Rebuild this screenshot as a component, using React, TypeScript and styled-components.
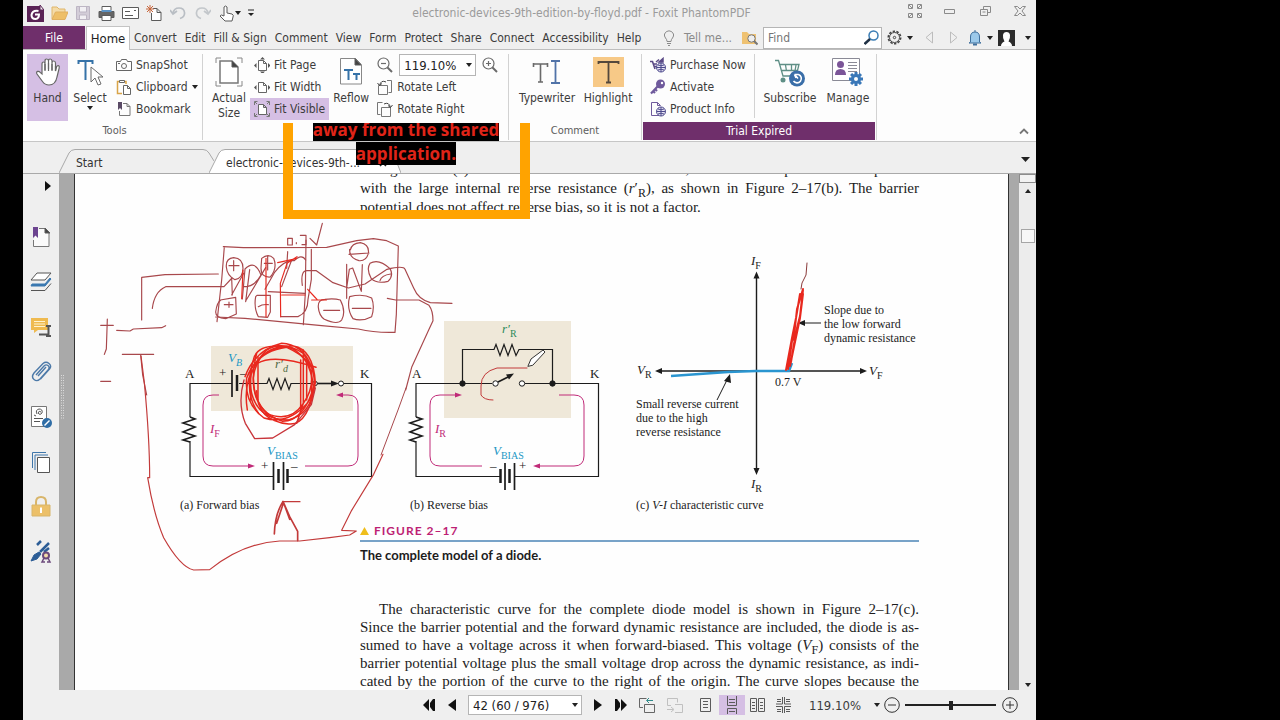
import React from "react";
import styled, { createGlobalStyle } from "styled-components";

const UI = `"DejaVu Sans Condensed", "DejaVu Sans", sans-serif`;
const BOOK = `"Liberation Serif", "Times New Roman", serif`;
const PURPLE = "#6f2f6b";
const LILAC = "#d5bfe4";
const CHROME = "#efefef";
const INK = "#a8484c";
const RED = "#e8281e";

const GlobalStyle = createGlobalStyle`
  *, *::before, *::after { box-sizing: border-box; }
  body { margin: 0; background: #000; font-family: ${UI}; font-size: 12px; color: #3c3c3c; }
  button, input, select { font: inherit; color: inherit; margin: 0; }
  button { border: 0; padding: 0; background: none; }
  svg { display: block; flex: none; }
`;

/* ---------- window frame ---------- */

const Desktop = styled.div`
  height: 100vh;
  padding: 0 244px 0 23px;
  background: #000;
  overflow: hidden;
`;

const Window = styled.main`
  position: relative;
  display: flex;
  flex-direction: column;
  height: 100%;
  background: ${CHROME};
`;

const TitleBar = styled.header`
  display: flex;
  align-items: center;
  height: 26px;
  flex: none;
  padding: 0 8px 0 4px;
`;

const QuickTools = styled.div`
  display: flex;
  align-items: center;
  gap: 7px;
  width: 232px;
`;

const Title = styled.h1`
  flex: 1;
  margin: 0;
  padding-right: 4px;
  font-size: 12px;
  font-weight: 400;
  color: #9b9b9b;
  text-align: center;
  white-space: nowrap;
`;

const WindowTools = styled.div`
  display: flex;
  align-items: center;
  gap: 18px;
  margin-bottom: 5px;
`;

const IconButton = styled.button`
  display: flex;
  align-items: center;
  justify-content: center;
  flex: none;
`;

/* ---------- menu bar ---------- */

const MenuBar = styled.nav`
  display: flex;
  align-items: stretch;
  height: 24px;
  flex: none;
  border-bottom: 1px solid #bdbdbd;
`;

const FileTab = styled.button`
  width: 62px;
  background: ${PURPLE};
  color: #fff;
`;

const HomeTab = styled.button`
  width: 44px;
  margin-left: 1px;
  height: 24px;
  border: 1px solid #c4c4c4;
  border-bottom: 0;
  background: #fff;
  font-size: 13px;
  color: #222;
`;

const MenuItem = styled.button`
  padding: 0 4px;
  white-space: nowrap;
`;

const MenuTools = styled.div`
  display: flex;
  align-items: center;
  flex: 1;
  justify-content: flex-end;
  padding-right: 5px;
`;

const TellMe = styled.button`
  display: flex;
  align-items: center;
  gap: 9px;
  margin-right: 10px;
  color: #8a8a8a;
  white-space: nowrap;
`;

const FindBox = styled.label`
  display: flex;
  align-items: center;
  width: 119px;
  height: 22px;
  margin: 0 5px;
  padding: 0 2px 0 4px;
  border: 1px solid #b5b5b5;
  background: #fff;
  input {
    flex: 1;
    min-width: 0;
    border: 0;
    padding: 0;
    background: none;
    outline: 0;
  }
  input::placeholder { color: #757575; opacity: 1; }
`;

const MenuGlyphs = styled.div`
  display: flex;
  align-items: center;
  gap: 5px;
`;

const AccountButton = styled(IconButton)`
  gap: 10px;
`;

/* ---------- ribbon ---------- */

const Ribbon = styled.section`
  display: flex;
  height: 92px;
  flex: none;
  padding: 4px 7px 0 4px;
  background: #fdfdfd;
  border-bottom: 1px solid #c6c6c6;
`;

const Group = styled.div<{ $width: number }>`
  display: flex;
  flex-direction: column;
  width: ${(p) => p.$width}px;
  margin-bottom: 1px;
  border-right: 1px solid #d2d2d2;
`;

const GroupBody = styled.div<{ $gap?: number; $indent?: number }>`
  display: flex;
  height: 67px;
  flex: none;
  gap: ${(p) => p.$gap ?? 4}px;
  padding-left: ${(p) => p.$indent ?? 0}px;
`;

const GroupLabel = styled.div<{ $alert?: boolean }>`
  height: 18px;
  margin: 1px 1px 0;
  line-height: 18px;
  text-align: center;
  color: ${(p) => (p.$alert ? "#fff" : "#5c5c5c")};
  font-size: ${(p) => (p.$alert ? 12 : 11)}px;
  background: ${(p) => (p.$alert ? PURPLE : "transparent")};
`;

const BigButton = styled.button<{ $width: number; $on?: boolean }>`
  display: flex;
  flex-direction: column;
  align-items: center;
  width: ${(p) => p.$width}px;
  padding-top: 3px;
  line-height: 15px;
  white-space: nowrap;
  background: ${(p) => (p.$on ? LILAC : "none")};
  svg { margin-bottom: 4px; }
`;

const Stack = styled.div`
  display: flex;
  flex-direction: column;
`;

const SmallButton = styled.button<{ $on?: boolean }>`
  display: flex;
  align-items: center;
  gap: 4px;
  height: 22px;
  padding: 0 4px;
  white-space: nowrap;
  background: ${(p) => (p.$on ? LILAC : "none")};
`;

const ZoomRow = styled.div`
  display: flex;
  align-items: center;
  gap: 6px;
  height: 22px;
  padding-left: 4px;
`;

const DropDown = styled.div<{ $width: number; $height: number }>`
  display: grid;
  align-items: center;
  width: ${(p) => p.$width}px;
  height: ${(p) => p.$height}px;
  border: 1px solid #b5b5b5;
  background: #fff;
  color: #222;
  font-size: 13px;
  select, svg { grid-area: 1 / 1; }
  select {
    appearance: none;
    width: 100%;
    border: 0;
    padding: 0 0 0 4px;
    background: none;
    outline: 0;
  }
  svg { justify-self: end; margin-right: 3px; pointer-events: none; }
`;

const Divider = styled.div`
  width: 1px;
  height: 64px;
  background: #d2d2d2;
`;

const Collapse = styled.button`
  margin: auto 0 6px auto;
`;

/* ---------- document tabs ---------- */

const TabStrip = styled.div`
  display: flex;
  align-items: flex-end;
  height: 32px;
  flex: none;
  padding-left: 36px;
  border-bottom: 1px solid #a9a9a9;
`;

const DocTab = styled.button<{ $width: number }>`
  position: relative;
  display: flex;
  align-items: center;
  justify-content: space-between;
  width: ${(p) => p.$width}px;
  height: 24px;
  margin-right: -5px;
  padding: 4px 14px 0 17px;
  color: #333;
  white-space: nowrap;
  > svg:first-child { position: absolute; inset: 0; }
  > span, > svg { position: relative; }
`;

const TabMenu = styled.button`
  margin: 0 6px 11px auto;
`;

/* ---------- document area ---------- */

const Workspace = styled.div`
  display: flex;
  flex: 1;
  min-height: 0;
  background: #a9a9a9;
`;

const SideBar = styled.aside`
  display: flex;
  flex-direction: column;
  align-items: center;
  width: 36px;
  flex: none;
  padding-top: 7px;
  background: ${CHROME};
`;

const Expand = styled.button`
  margin: 0 0 35px 14px;
`;

const SideTools = styled.div`
  display: flex;
  flex-direction: column;
  gap: 23px;
`;

const SideButton = styled(IconButton)`
  width: 24px;
  height: 22px;
`;

const Splitter = styled.div`
  display: flex;
  align-items: center;
  width: 16px;
  flex: none;
  padding: 0 0 70px 2px;
  border-right: 1px solid #333;
`;

const PageView = styled.article`
  position: relative;
  flex: 1;
  min-width: 0;
  overflow: hidden;
  padding-left: 105px;
  margin-right: 10px;
  background: #fefefe;
  border-right: 1px solid #333;
  color: #1c1c1c;
  font-family: ${BOOK};
`;

const Column = styled.div`
  width: 559px;
  margin-left: 180px;
`;

const Lead = styled.p`
  margin: -14px 0 0;
  font-size: 15px;
  line-height: 19px;
`;

const Body = styled.p`
  margin: 36px 0 0;
  font-size: 15px;
  line-height: 18px;
`;

const Line = styled.span<{ $indent?: boolean; $last?: boolean }>`
  display: block;
  padding-left: ${(p) => (p.$indent ? 19 : 0)}px;
  text-align: justify;
  text-align-last: ${(p) => (p.$last ? "left" : "justify")};
  white-space: nowrap;
  sub { font-size: 12px; line-height: 0; }
`;

const Figures = styled.div`
  display: grid;
  grid-template-columns: 230px 226px 1fr;
  margin-top: 33px;
`;

const Figure = styled.figure`
  margin: 0;
  svg { overflow: visible; }
  figcaption { font-size: 12px; line-height: 18px; white-space: nowrap; }
`;

const FigureTitle = styled.h2`
  display: flex;
  align-items: center;
  gap: 5px;
  margin: 7px 0 0;
  height: 21px;
  border-bottom: 2px solid #78a3c8;
  font: 700 12px Lato, sans-serif;
  letter-spacing: 1px;
  color: #bd1f74;
`;

const FigureNote = styled.p`
  margin: 4px 0 0;
  font: 700 13px/18px Lato, sans-serif;
`;

const InkLayer = styled.svg`
  position: absolute;
  top: 0;
  left: 0;
  pointer-events: none;
`;

const ScrollBar = styled.div`
  display: flex;
  flex-direction: column;
  align-items: center;
  width: 17px;
  flex: none;
  padding-bottom: 3px;
  background: #ececec;
`;

const SplitBox = styled.div`
  width: 100%;
  height: 9px;
  margin-bottom: 6px;
  border: 1px solid #8c8c8c;
  background: #f2f2f2;
`;

const Thumb = styled.div`
  width: 14px;
  height: 14px;
  margin: 36px 0 auto;
  border: 1px solid #a5a5a5;
  background: #f7f7f7;
`;

/* ---------- status bar ---------- */

const StatusBar = styled.footer`
  display: flex;
  align-items: center;
  justify-content: flex-end;
  height: 30px;
  flex: none;
  padding-right: 18px;
`;

const StatusGroup = styled.div<{ $gap: number; $after: number }>`
  display: flex;
  align-items: center;
  gap: ${(p) => p.$gap}px;
  margin-right: ${(p) => p.$after}px;
`;

const ViewMode = styled.button<{ $on?: boolean }>`
  display: flex;
  align-items: center;
  justify-content: center;
  width: 26px;
  height: 20px;
  background: ${(p) => (p.$on ? LILAC : "none")};
`;

const ZoomValue = styled.button`
  display: flex;
  align-items: center;
  gap: 13px;
  margin-right: 4px;
  font-size: 13px;
`;

const ZoomSlider = styled.input`
  appearance: none;
  width: 91px;
  height: 16px;
  margin: 0 6px 0 5px;
  background: linear-gradient(#222, #222) center / 100% 2px no-repeat;
  &::-webkit-slider-thumb {
    appearance: none;
    width: 4px;
    height: 9px;
    background: #222;
  }
`;

/* ---------- screen sharing frame ---------- */

const ShareFrame = styled.div`
  position: absolute;
  left: 260px;
  top: 123px;
  width: 247px;
  height: 96px;
  border: solid #ffa300;
  border-width: 0 10px 9px;
  pointer-events: none;
`;

const ShareNotice = styled.p`
  position: absolute;
  left: 273px;
  top: 123px;
  width: 220px;
  height: 42px;
  margin: 0;
  overflow: hidden;
  display: flex;
  flex-direction: column;
  align-items: center;
  justify-content: flex-end;
  gap: 1px;
  font: 700 17px/23px "Open Sans", sans-serif;
  color: #e02418;
  white-space: nowrap;
  span { background: #000; }
`;

/* ---------- glyphs ---------- */

type SvgProps = { w: number; h: number; children: React.ReactNode; sw?: number; stroke?: string; vb?: string };

const Svg = ({ w, h, children, sw = 1, stroke = "#5b5b5b", vb }: SvgProps) => (
  <svg width={w} height={h} viewBox={vb ?? `0 0 ${w} ${h}`} fill="none" stroke={stroke} strokeWidth={sw} aria-hidden="true">
    {children}
  </svg>
);

const Caret = ({ w = 6, h = 4 }: { w?: number; h?: number }) => (
  <Svg w={w} h={h}><path d={`M0 0h${w}L${w / 2} ${h}z`} fill="#222" stroke="none" /></Svg>
);

const HandGlyph = () => (
  <Svg w={28} h={30} stroke="#666" sw={1.2}>
    <path d="M8 17V7q0-2 1.500-2T11 7v6V4q0-2 1.700-2T14.500 4v8V4q0-2 1.700-2T18 4v9V6q0-2 1.700-2T21.500 6v8l1-4q1-2 2.300-1.200.8.600.3 2.600L23 20q-1.500 8-8 8-4 0-6.500-3.500L3 17q-1-2 .6-2.600 1.400-.5 2.600 1z" fill="#fff" />
    <path d="M11 7v7M14.500 6v8M18 7v7M21.500 9v5" />
  </Svg>
);

const SelectGlyph = () => (
  <Svg w={28} h={30}>
    <path d="M2 4h15M9.500 4v19M2.500 3v4M16.500 3v4" stroke="#3572a8" strokeWidth={2} />
    <path d="M15 10v15l4-4 3 7 3-1-3-7h5z" fill="#fff" stroke="#6a6a6a" />
  </Svg>
);

const PageGlyph = () => (
  <Svg w={28} h={30}>
    <path d="M1 6V1h5M22 1h5v5M27 24v5h-5M6 29H1v-5" stroke="#888" />
    <path d="M5 4h12l6 6v16H5z" stroke="#777" strokeWidth={1.5} fill="#fff" />
    <path d="M17 4v6h6z" fill="#444" />
  </Svg>
);

const FitGlyph = ({ kind }: { kind: "page" | "width" | "visible" }) => (
  <Svg w={16} h={16} stroke="#666">
    <path d="M4.500 3.500h5l3 3v7h-8zM9.500 3.500v3h3" fill="#fff" />
    {kind !== "visible" && <path d="M2.500 6L0 8.500 2.500 11zM14 6l2.500 2.500L14 11z" fill="#555" stroke="none" />}
    {kind === "page" && <path d="M6 2.500L8.500 0 11 2.500zM6 14.500h5L8.500 17z" fill="#555" stroke="none" />}
    {kind === "visible" && <path d="M.5 4V.500h3M12.500.500h3V4M15.500 12v3.500h-3M3.500 15.500h-3V12M1 1l2 2M15 1l-2 2M1 15l2-2M15 15l-2-2" stroke="#777" />}
  </Svg>
);

const ReflowGlyph = () => (
  <Svg w={28} h={30}>
    <path d="M3.500 1.500h15l6 6V27h-21z" stroke="#888" fill="#fff" />
    <path d="M18 1.500v6.500h6z" fill="#444" />
    <path d="M7 13h9M11.500 13v10M16 17h7M19.500 17v6" stroke="#3572a8" strokeWidth={2} />
  </Svg>
);

const Magnifier = ({ plus }: { plus?: boolean }) => (
  <Svg w={16} h={16} stroke="#6a6a6a" sw={1.2}>
    <circle cx="6.500" cy="6.500" r="5.500" />
    <path d={plus ? "M4 6.500h5M6.500 4v5" : "M4 6.500h5"} />
    <path d="M10.500 10.500L15 15" strokeWidth={2} />
  </Svg>
);

const RotateGlyph = ({ right }: { right?: boolean }) => (
  <Svg w={16} h={16} stroke="#777">
    {right ? (
      <>
        <path d="M3.500 13.500h-3V1.500h5M4.500 6.500h9v9h-9z" />
        <path d="M7 3q5-2.500 6.500 3.500M11 4.500l2.500 2 2-2.500" stroke="#444" />
      </>
    ) : (
      <>
        <path d="M10 1.500h4.500v12h-3M1.500 6.500h9v9h-9z" />
        <path d="M9 3Q4 .500 2.500 6.500M.5 4l2 2.500L5 4.500" stroke="#444" />
      </>
    )}
  </Svg>
);

const CameraGlyph = () => (
  <Svg w={16} h={14} stroke="#666">
    <path d="M.5 3.500h4l1-2h5l1 2h4v9H.500z" /><circle cx="8" cy="8" r="2.500" /><path d="M2 5.500h2" />
  </Svg>
);

const ClipboardGlyph = () => (
  <Svg w={16} h={16} stroke="#666">
    <path d="M10 5V2.500H1.500v12H6" stroke="#d9a548" strokeWidth={1.5} /><path d="M3.500 3.500v-2h5v2z" fill="#fff" />
    <path d="M7.500 6.500h4l3 3v6h-7zM11.500 6.500v3h3" fill="#fff" />
  </Svg>
);

const BookmarkGlyph = () => (
  <Svg w={16} h={16} stroke="#777">
    <path d="M7 2.500h4l3 3v9H3.500V10M11 2.500v3h3" /><path d="M2 1h4v8L4 7 2 9z" fill="#5a4a66" stroke="none" />
  </Svg>
);

const TypeGlyph = () => (
  <Svg w={30} h={30}>
    <path d="M1 7h15M1.500 6v4M15.500 6v4M8.500 7v18M6 25h5" stroke="#6a6a6a" strokeWidth={1.6} />
    <path d="M19 4h9M19 26h9M23.500 4v22" stroke="#5173a8" strokeWidth={1.8} />
  </Svg>
);

const HighlightGlyph = () => (
  <Svg w={31} h={30}>
    <path d="M0 0h31v30H0z" fill="#f7c987" stroke="none" />
    <path d="M5 5h21M5.500 4v3M25.500 4v3M15.500 5v20M13 25.500h5" stroke="#54483c" strokeWidth={1.8} />
  </Svg>
);

const Globe = () => (
  <>
    <circle cx="11" cy="10.500" r="4.500" fill="#e9e6f5" stroke="#4d4a8c" />
    <path d="M6.500 10.500h9M11 6v9M8 8q3 1.500 6 0M8 13q3-1.500 6 0" stroke="#4d4a8c" />
  </>
);

const PurchaseGlyph = () => (
  <Svg w={16} h={16} stroke="#5b4a86">
    <path d="M0 4.500h2.500L5 12M3 7h4M4 9.500h3" strokeWidth={1.6} /><path d="M6 5l3-2.500M9 5l4-3.500V5z" fill="#5b4a86" strokeWidth={1.5} /><Globe />
  </Svg>
);

const KeyGlyph = () => (
  <Svg w={16} h={16} stroke="#6f5a9c">
    <circle cx="10.500" cy="5" r="4.500" fill="#6f5a9c" stroke="none" /><circle cx="12" cy="4" r="1.200" fill="#fff" stroke="none" />
    <path d="M8 7l-7 7.500M3 12l2 2M5 10l2 2" strokeWidth={2.2} />
  </Svg>
);

const ProductGlyph = () => (
  <Svg w={16} h={16} stroke="#6f5a9c"><path d="M9 14.500H1.500V1.500h6l3 3M7.500 1.500v3h3" /><Globe /></Svg>
);

const CartGlyph = () => (
  <Svg w={30} h={30} stroke="#5f8f86">
    <path d="M0 3.500h3.500L8 19h7M5 7.500h19l-1.500 6H7M10.500 8l1 6M16.500 8v6M21 8l-1 6" strokeWidth={1.3} />
    <circle cx="8" cy="23" r="2.500" fill="#5f8f86" stroke="none" />
    <circle cx="22" cy="21.500" r="8" fill="#3a6ea8" stroke="none" />
    <path d="M18.500 24a4.300 4.300 0 105-6.500M23.500 17.500h-4M19.500 17.500l1.500 3.500M19.500 17.500l3.500 4" stroke="#fff" strokeWidth={1.6} />
  </Svg>
);

const teeth = Array.from({ length: 8 }, (_, i) => i * 45);

const ManageGlyph = () => (
  <Svg w={32} h={30} stroke="#8a8a96">
    <path d="M.5 1.500h27v22H.500z" fill="#fff" />
    <circle cx="8.500" cy="7.500" r="3.500" fill="#7b5598" stroke="none" />
    <path d="M3 18q0-6 5.500-6t5.500 6z" fill="#7b5598" stroke="none" />
    <path d="M16 5.500h9M16 8.500h9M16 11.500h9M16 14.500h9" />
    <g stroke="#3a78b8" strokeWidth={3}>
      {teeth.map((a) => <path key={a} d="M24 18v-3" transform={`rotate(${a} 24 22)`} />)}
      <circle cx="24" cy="22" r="3.500" fill="#fff" />
    </g>
  </Svg>
);

const quickGlyphs: [string, React.ReactNode][] = [
  ["Foxit", <Svg w={17} h={17}><path d="M0 1h13l4 4v12H0z" fill="#5a2356" stroke="none" /><path d="M13 0v5h4z" fill="#efefef" stroke="#5a2356" /><path d="M11.500 6q-6-1-7 4 0 4 4 4 3.500-.500 3.500-4.500H8" stroke="#fff" strokeWidth={2} /></Svg>],
  ["Open", <Svg w={17} h={16}><path d="M1 14V2h5l2 2h6v4" fill="#f4dba7" stroke="#dfb66b" /><path d="M1 14.500L4.500 7H17l-3 7.500z" fill="#eebf68" stroke="#e0b060" /></Svg>],
  ["Save", <Svg w={16} h={16} stroke="#bdb6c4"><path d="M1.500 1.500h13v13h-13z" fill="#d3cdd8" /><path d="M4.500 2v5h7V2M4.500 14v-4h7v4" fill="#f2f0f4" /></Svg>],
  ["Print", <Svg w={17} h={17}><path d="M4 5V1.500h9V5" fill="#fff" /><path d="M1 6.500h15v6H1z" fill="#666" /><path d="M3.500 6h10" stroke="#5b92c4" strokeWidth={2} /><path d="M4 10.500h9v5H4z" fill="#fff" /></Svg>],
  ["Email", <Svg w={17} h={14}><path d="M.5 1.500h16v11H.500z" fill="#fff" /><path d="M3 5.500h5M3 9.500h8M12 4.500h2" /></Svg>],
  ["New", <Svg w={17} h={17}><path d="M7 3.500h4l4 4v8H5.500V8M11 3.500v4h4" fill="#fff" /><path d="M4 0v8M0 4h8M1 1l6 6M7 1L1 7" stroke="#c8663c" /></Svg>],
  ["Undo", <Svg w={17} h={16} stroke="#b9bec4" sw={1.7}><path d="M3 8Q4 3 9 3q5 0 5.500 4.500T10 13.500M0 5l3 4 4-3" /></Svg>],
  ["Redo", <Svg w={17} h={16} stroke="#c3c7cb" sw={1.7}><path d="M14 8q-1-5-6-5-5 0-5.500 4.500T7 13.500M17 5l-3 4-4-3" /></Svg>],
];

const sideGlyphs: [string, React.ReactNode][] = [
  ["Bookmarks", <Svg w={22} h={22}><path d="M9 2.500h6l4 4V20.500H3.500V14" stroke="#777" fill="#fafafa" /><path d="M15 2v5h5z" fill="#444" /><path d="M3 1h5v11L5.500 9.500 3 12z" fill="#6c4490" stroke="none" /></Svg>],
  ["Layers", <Svg w={24} h={22}><path d="M8 2h14l-6 7H2z" fill="#fff" stroke="#555" /><path d="M3 13h13l5-6 1 1-6 7H2z" fill="#3a78b0" stroke="#3a78b0" /><path d="M2 19.500h14l6-7" stroke="#555" /></Svg>],
  ["Comments", <Svg w={22} h={22}><path d="M1 2h17v12H8l-4 3v-3H1z" fill="#efba50" stroke="none" /><path d="M4 5.500h11M4 8h11M4 10.500h11" stroke="#fff3d0" /><path d="M9 18.500h10M18.500 10v10M16 10h5M16 20h5" stroke="#555" strokeWidth={2} /></Svg>],
  ["Attachments", <Svg w={22} h={22}><path d="M6 14l8-9q2-2 4-.5t.5 4L10 18q-3 3-6 .5T4 12l9-9.500q3-2.500 6 0t.5 5.500l-9 10M8 15l8-9" stroke="#4c79a8" strokeWidth={1.4} /></Svg>],
  ["Signatures", <Svg w={24} h={24}><path d="M2.500 1.500h15v20h-15z" fill="#fff" stroke="#777" /><path d="M8 9q-2-4 2-5 4 0 3 4-2 3-4 0 1-3 3-1M5 13.500h9M5 16.500h6M5 10l2 1" stroke="#555" /><circle cx="18" cy="18" r="5" fill="#2f6da6" stroke="none" /><path d="M15.500 20.500l5-5" stroke="#fff" strokeWidth={1.5} /></Svg>],
  ["Pages", <Svg w={22} h={22} stroke="#3f77ab"><path d="M2.500 17V1.500H16M5 19V4h13" /><path d="M7.500 6.500h12v15h-12z" fill="#fff" stroke="#555" /></Svg>],
  ["Security", <Svg w={22} h={24}><path d="M6 10V7q0-5 5-5t5 5v3" stroke="#d8b56a" strokeWidth={2} /><path d="M2 10h18v11H2z" fill="#ecc069" stroke="#d8b56a" /><path d="M11 13v5M10 13.500h2" stroke="#fff" strokeWidth={2} /></Svg>],
  ["Fill and sign", <Svg w={24} h={24} stroke="#2c5d96"><path d="M2 21l3-6 5-3 2 2-4 5z" fill="#2c5d96" /><path d="M11 12l9-9M8 5l4-4M15 12l5-4" strokeWidth={2.5} /><circle cx="17" cy="15.500" r="3" stroke="#6c4a7c" strokeWidth={2} fill="#f3dca8" /><path d="M15 18l-2 4h3M19 18l2 4h-3" stroke="#6c4a7c" strokeWidth={1.5} /></Svg>],
];

/* ---------- figures ---------- */

const Sym = styled.text<{ $c?: string; $size?: number }>`
  font-family: ${BOOK};
  font-size: ${(p) => p.$size ?? 13}px;
  fill: ${(p) => p.$c ?? "#1c1c1c"};
  stroke: none;
`;

type QuantityProps = { x: number; y: number; v: string; s: string; c?: string; italicSub?: boolean };

const Quantity = ({ x, y, v, s, c, italicSub }: QuantityProps) => (
  <Sym x={x} y={y} $c={c}>
    <tspan fontStyle="italic">{v}</tspan>
    <tspan dy="4" fontSize="10" fontStyle={italicSub ? "italic" : "normal"}>{s}</tspan>
  </Sym>
);

const MAGENTA = "#c02a78";
const CYAN = "#1a97c4";

const ForwardCircuit = () => (
  <svg width="230" height="246" viewBox="180 250 230 246" fill="none" stroke="#1c1c1c" role="img" aria-label="Forward bias circuit">
    <path d="M211 346h142v65H211z" fill="#efe8d9" stroke="none" />
    <path d="M232 383.500H190V417M239 383.500h28l2-5 4 11 4-11 4 11 4-11 4 11 2-6h22M343.500 383.500H371.500V476.500H288M273 476.500H190V441" strokeWidth={1.2} />
    <path d="M190 417l5 2-12 4 12 4-12 5 12 4-12 4 7 2" strokeWidth={1.6} />
    <path d="M232 370v27M273.500 462v28M283.500 462v28" strokeWidth={1.7} />
    <path d="M237 375v16M278.500 469v14M287.500 469v14" strokeWidth={2.5} />
    <path d="M317 383.500h18" strokeWidth={1.6} /><path d="M331 380.500l8 3-8 3z" fill="#1c1c1c" stroke="none" />
    <circle cx="315" cy="383.500" r="2.300" fill="#fff" /><circle cx="341" cy="383.500" r="2.500" fill="#fff" />
    <g stroke={MAGENTA}>
      <path d="M219 395h-6q-10 0-10 10v51q0 10 10 10h36M305 466h43q10 0 10-10v-51q0-10-10-10h-7" />
      <path d="M248 463.500l7 2.500-7 2.500zM343 392.500l-7 2.500 7 2.500z" fill={MAGENTA} stroke="none" />
    </g>
    <Sym x={185} y={378}>A</Sym><Sym x={360} y={378}>K</Sym>
    <Sym x={219} y={377}>+</Sym><Sym x={240} y={377}>–</Sym>
    <Sym x={261} y={470}>+</Sym><Sym x={291} y={470}>–</Sym>
    <Quantity x={228} y={362} v="V" s="B" c={CYAN} italicSub />
    <Quantity x={275} y={368} v="r′" s="d" c="#4f6a46" italicSub />
    <Quantity x={210} y={433} v="I" s="F" c={MAGENTA} />
    <Quantity x={267} y={455} v="V" s="BIAS" c={CYAN} />
  </svg>
);

const ReverseCircuit = () => (
  <svg width="226" height="246" viewBox="410 250 226 246" fill="none" stroke="#1c1c1c" role="img" aria-label="Reverse bias circuit">
    <path d="M444 321h127v97H444z" fill="#efe8d9" stroke="none" />
    <path d="M492 383.500H416V417M462.500 383V349.500H494l2-5 4 11 4-11 4 11 4-11 4 11 3-6h33.500V383M525 383.500h73.500V476.500H515M500 476.500H416V441" strokeWidth={1.2} />
    <path d="M416 417l6 2-12 4 12 4-12 5 12 4-12 4 6 2" strokeWidth={1.6} />
    <path d="M505 463v27M514.500 463v27" strokeWidth={1.7} />
    <path d="M500.500 469v14M509.500 469v14" strokeWidth={2.5} />
    <path d="M498 382l12-6" strokeWidth={1.6} /><path d="M506 374.500l8-1-5 6z" fill="#1c1c1c" stroke="none" />
    <circle cx="462.500" cy="383.500" r="2.700" fill="#1c1c1c" /><circle cx="552.500" cy="383.500" r="2.700" fill="#1c1c1c" />
    <circle cx="495.500" cy="383.500" r="2.700" fill="#fff" /><circle cx="522" cy="383.500" r="2.700" fill="#fff" />
    <g stroke={MAGENTA}>
      <path d="M482 466h-42q-10 0-10-10v-51q0-10 10-10h16M559 395h15q10 0 10 10v51q0 10-10 10h-36" />
      <path d="M455 392.500l7 2.500-7 2.500zM540 463.500l-7 2.500 7 2.500z" fill={MAGENTA} stroke="none" />
    </g>
    <Sym x={412} y={378}>A</Sym><Sym x={590} y={378}>K</Sym>
    <Sym x={490} y={470}>–</Sym><Sym x={519} y={470}>+</Sym>
    <Quantity x={502} y={333} v="r′" s="R" c="#2b8a5a" />
    <Quantity x={435} y={433} v="I" s="R" c={MAGENTA} />
    <Quantity x={493} y={455} v="V" s="BIAS" c={CYAN} />
  </svg>
);

const CurveChart = () => (
  <svg width="290" height="246" viewBox="636 250 290 246" fill="none" stroke="#1c1c1c" role="img" aria-label="V-I characteristic curve">
    <path d="M756.500 276v194M660 371h202" strokeWidth={1.4} />
    <path d="M753.500 278.500l3-7 3 7zM753.500 468l3 7 3-7zM662 368l-7 3 7 3zM860 368l7 3-7 3z" fill="#1c1c1c" stroke="none" />
    <path d="M671 376l57-4 28-1h33l3-8" stroke="#2a95d0" strokeWidth={2.5} />
    <path d="M821 323h-17M717 400l11-22" /><path d="M805 320l-7 3 7 3zM724 381l6-7 1 9z" fill="#1c1c1c" stroke="none" />
    <Quantity x={751} y={265} v="I" s="F" /><Quantity x={751} y={488} v="I" s="R" />
    <Quantity x={637} y={374} v="V" s="R" /><Quantity x={869} y={375} v="V" s="F" />
    <Sym x={775} y={386} $size={12}>0.7 V</Sym>
    <Sym x={824} y={314} $size={12}>Slope due to</Sym>
    <Sym x={824} y={328} $size={12}>the low forward</Sym>
    <Sym x={824} y={342} $size={12}>dynamic resistance</Sym>
    <Sym x={636} y={408} $size={12}>Small reverse current</Sym>
    <Sym x={636} y={422} $size={12}>due to the high</Sym>
    <Sym x={636} y={436} $size={12}>reverse resistance</Sym>
  </svg>
);

const Ink = () => (
  <InkLayer width="933" height="516" viewBox="75 174 933 516" fill="none" strokeLinecap="round" strokeLinejoin="round" aria-hidden="true">
    <g transform="translate(95 220) scale(.33333)" stroke={INK} strokeWidth={3.5}>
      <path d="M140 300V172l70-8 160-2M172 265q6-50 40-65h175l24-26M65 331l40 2 10-6 85-4 12-6M82 403h94M137 405l6 60 12 60" />
      <path d="M37 297l-3 90-6 16M17 316h38M17 484h30" />
      <path d="M388 80l-8 100-14 125M385 80l60 3 250-1 90-20 50-6 40 6 35 16-6 205-4 54q-60 2-110-10l-110-10-230-22-88-4" />
      <path d="M578 55h14v20h-14zM604 68v3M616 46h17v28h-12M645 55l20 20 17-65" />
      <path d="M633 60l-2 160-6 94M649 88v90l-10 60q0 40-30 52h-52" />
      <path d="M877 235l25 5h70l30 16q12 16 12 46l-14 30-50 110-18 68" />
      <path d="M416 113q-24 2-22 28t26 38q24-4 24-34t-28-32M402 137h30M416 122v30M376 240l46-8 2 50-32 14q-30-2-30-20 4-30 16-36M388 254h26M402 246v16M500 115q20-16 36 0 12 30-10 56-28 2-28-26zM508 130h24M518 110v40M486 226h40v50l-8 16-28-2q-14-26-8-60zM490 260q12-8 30-6" />
      <path d="M412 225l-2-50M442 237l8-90q30-30 48 18-20 36-50 35M452 245l12-96M410 225l36-65M452 243l60-100" />
      <path d="M766 90q4-20 30-22 28 6 24 32-6 24-28 22-30-8-28-34M762 103l60-4M825 130q26-16 60 16 12 20-6 38-34 8-50-8-16-28-4-46M855 182q4-16 32-20M690 238q-22 0-20 24t18 36q40 18 52 2 14-26-4-60-20-6-46-2M686 271h48M764 230q40-10 66 4 10 26 0 56-30 16-56 6-20-30-10-66M772 265h56" />
      <path d="M755 235V133M755 204l8-56 10-4 26 70 3-80" />
      <path d="M510 208l28-50q30-40 60-36 22-22 34-2M622 196q-6-44 14-44h28l50 36 46 16 50-12 66-44q50-12 54 0l26 56q14 34 50 44l65 2" />
      <path d="M578 95l-3 50M590 120l-30 80M520 215l110 5" />
      <path d="M513 115v175M557 290l-1-100 20-60 30-20M440 236l4-86M560 225h70M638 208l28 30M650 240h44M548 128l56-12M638 208l24 26" stroke={RED} />
    </g>
    <path d="M406 388l-8 22-17 45" stroke={INK} />
    <g transform="translate(130 330) scale(.33333)" stroke="#c23a3a" strokeWidth={3.5}>
      <path d="M33 78l10 80q16 170 16 285h-6q18 110 48 180 50 88 90 97l48-1q100-80 210-86h60l90-10 60-8 20-12-44-2 30-60 66-108 28-60" />
      <path d="M458 515h52" />
      <path d="M433 612q2-60 26-98l20 46 24 44v28M440 580l20-60M463 524l16 44" strokeWidth={5} />
    </g>
    <g transform="translate(130 330) scale(.33333)" stroke={RED} strokeWidth={4.5}>
      <path d="M345 140q30-80 110-100 60 4 85 60 30 70-8 120-60 66-130 44-60-44-52-120 30-80 120-92 90 40 84 110-30 110-96 112-90-30-88-130 10-100 120-96 60 10 66 110-20 130-80 124-96-10-96-100" />
      <path d="M380 70q-30 120 30 180 70 30 110-30 50-70 0-150-60-40-110-10-50 50-50 100 10 110 116 110 70-20 74-100-10-100-80-120-90-10-100 40-30 100 16 160M352 240q-14-90 30-140 50-30 176 12M520 60v160l-20 60" />
      <path d="M342 150q-20 70 4 130l28 46 54-2 66-40 50-60 12-50" stroke="#c8343a" strokeWidth={4} />
      <path d="M362 130v80M384 80v130M512 90v150M530 90v120M545 120v90" />
    </g>
    <g stroke={RED}>
      <path d="M788 369l4-28 3-14 2-18 6-20M786 370l6-32 4-20 4-24M791 362l4-24 5-20 3-24M794 340l6-24 3-26M790 366l10-48" strokeWidth={2} />
      <path d="M801 289l1-6 4-8 1-12" stroke="#8a3a3a" />
      <path d="M527 368h-30q-16 4-16 18v9q3 5 12 5" stroke="#c23a3a" />
    </g>
    <path d="M528 366l3-7 12-9 2 2-12 13z" fill="#fff" stroke="#333" />
  </InkLayer>
);

/* ---------- page ---------- */

const menus = ["Convert", "Edit", "Fill & Sign", "Comment", "View", "Form", "Protect", "Share", "Connect", "Accessibility", "Help"];

export default function App() {
  return (
    <Desktop>
      <GlobalStyle />
      <Window>
        <TitleBar>
          <QuickTools>
            {quickGlyphs.map(([name, glyph]) => <IconButton key={name} aria-label={name}>{glyph}</IconButton>)}
            <IconButton aria-label="Touch mode">
              <Svg w={17} h={17}><path d="M6 11V2q1.500-2 3 0v6l5 1q2 1 1 3l-1 4H7L2 11q1-2 4 0z" fill="#fff" /></Svg>
              <Caret />
            </IconButton>
            <IconButton aria-label="Customize"><Svg w={6} h={8}><path d="M0 1h6" stroke="#222" /><path d="M0 4h6L3 7z" fill="#222" stroke="none" /></Svg></IconButton>
          </QuickTools>
          <Title>electronic-devices-9th-edition-by-floyd.pdf - Foxit PhantomPDF</Title>
          <WindowTools>
            <IconButton aria-label="Full screen"><Svg w={14} h={14} stroke="#8a8a8a"><path d="M.5.500h4v4h-4zM9.500.500h4v4h-4zM.500 9.500h4v4h-4zM9.500 9.500h4v4h-4zM1 1l3 3M13 1l-3 3M1 13l3-3M13 13l-3-3" /></Svg></IconButton>
            <IconButton aria-label="Minimize"><Svg w={18} h={12} stroke="#8a8a8a"><path d="M4.500 4.500h10v4h-10z" /></Svg></IconButton>
            <IconButton aria-label="Restore"><Svg w={18} h={12} stroke="#8a8a8a"><path d="M7.500 4V1.500h7v6H12M4.500 4.500h7v6h-7zM6.500 7h3" /></Svg></IconButton>
            <IconButton aria-label="Close"><Svg w={16} h={12} stroke="#8a8a8a"><path d="M2.500 1.500h3L8 4l2.500-2.500h3L10 6l3.500 4.500h-3L8 8l-2.500 2.500h-3L6 6z" /></Svg></IconButton>
          </WindowTools>
        </TitleBar>

        <MenuBar>
          <FileTab>File</FileTab>
          <HomeTab>Home</HomeTab>
          {menus.map((m) => <MenuItem key={m}>{m}</MenuItem>)}
          <MenuTools>
            <TellMe>
              <Svg w={12} h={16} stroke="#8a8a8a"><path d="M4 11.500q0-2-1.500-3.500Q1 6 1.500 4 3 .800 6 .800t4.500 3.200q.5 2-1 4Q8 9.500 8 11.500zM4 13.500h4M5 15.500h2" /></Svg>
              Tell me...
            </TellMe>
            <IconButton aria-label="Search folder"><Svg w={16} h={16}><path d="M0 2h5l2 2h7v10H0z" fill="#efc272" stroke="none" /><circle cx="9.500" cy="8.500" r="3.700" fill="#eee" stroke="#777" /><path d="M12 11l3.500 3.500" stroke="#777" strokeWidth={2} /></Svg></IconButton>
            <FindBox>
              <input type="text" placeholder="Find" aria-label="Find" />
              <Svg w={15} h={15}><circle cx="9.500" cy="5.500" r="4.500" stroke="#3a7cb4" strokeWidth={1.5} fill="#fff" /><path d="M6 9l-5.500 5" stroke="#1f3044" strokeWidth={2.5} /></Svg>
            </FindBox>
            <MenuGlyphs>
              <IconButton aria-label="Search options"><Svg w={15} h={15} stroke="#444"><circle cx="7.500" cy="7.500" r="6.200" strokeDasharray="2.400 1.400" strokeWidth={1.6} /><circle cx="7.500" cy="7.500" r="5" /><circle cx="7.500" cy="7.500" r="1.200" /></Svg></IconButton>
              <Caret />
              <IconButton aria-label="Previous result"><Svg w={20} h={13} stroke="#bcbcbc"><path d="M14.500 1v11L8 6.500z" /></Svg></IconButton>
              <IconButton aria-label="Next result"><Svg w={20} h={13} stroke="#bcbcbc"><path d="M7.500 1v11L14 6.500z" /></Svg></IconButton>
              <IconButton aria-label="Notifications"><Svg w={14} h={16} stroke="#3f6f9c"><path d="M2.500 12V7q0-5 4.500-5t4.500 5v5l1.500 1H1zM7 0v2" fill="#9cc9ea" /><path d="M5 14.500h4" strokeWidth={2} /></Svg></IconButton>
              <Caret />
              <AccountButton aria-label="Account">
                <Svg w={17} h={16}><path d="M0 0h17v16H0z" fill="#2b2b2b" stroke="none" /><path d="M3 16q0-3 3.500-4.500Q4.500 8 5 5q.500-3 3.500-3T12 5q.500 3-1.500 6.500Q14 13 14 16z" fill="#fff" stroke="none" /></Svg>
                <Caret />
              </AccountButton>
            </MenuGlyphs>
          </MenuTools>
        </MenuBar>

        <Ribbon>
          <Group $width={176}>
            <GroupBody>
              <BigButton $width={41} $on><HandGlyph />Hand</BigButton>
              <BigButton $width={36}><SelectGlyph />Select<Caret /></BigButton>
              <Stack>
                <SmallButton><CameraGlyph />SnapShot</SmallButton>
                <SmallButton><ClipboardGlyph />Clipboard <Caret /></SmallButton>
                <SmallButton><BookmarkGlyph />Bookmark</SmallButton>
              </Stack>
            </GroupBody>
            <GroupLabel>Tools</GroupLabel>
          </Group>
          <Group $width={306}>
            <GroupBody $indent={8} $gap={3}>
              <BigButton $width={36}><PageGlyph />Actual<span>Size</span></BigButton>
              <Stack>
                <SmallButton><FitGlyph kind="page" />Fit Page</SmallButton>
                <SmallButton><FitGlyph kind="width" />Fit Width</SmallButton>
                <SmallButton $on><FitGlyph kind="visible" />Fit Visible</SmallButton>
              </Stack>
              <BigButton $width={38}><ReflowGlyph />Reflow</BigButton>
              <Stack>
                <ZoomRow>
                  <IconButton aria-label="Zoom out"><Magnifier /></IconButton>
                  <DropDown $width={77} $height={22}>
                    <select aria-label="Zoom"><option>119.10%</option></select>
                    <Caret />
                  </DropDown>
                  <IconButton aria-label="Zoom in"><Magnifier plus /></IconButton>
                </ZoomRow>
                <SmallButton><RotateGlyph />Rotate Left</SmallButton>
                <SmallButton><RotateGlyph right />Rotate Right</SmallButton>
              </Stack>
            </GroupBody>
          </Group>
          <Group $width={133}>
            <GroupBody $indent={7}>
              <BigButton $width={62}><TypeGlyph />Typewriter</BigButton>
              <BigButton $width={52}><HighlightGlyph />Highlight</BigButton>
            </GroupBody>
            <GroupLabel>Comment</GroupLabel>
          </Group>
          <Group $width={235}>
            <GroupBody $indent={4}>
              <Stack>
                <SmallButton><PurchaseGlyph />Purchase Now</SmallButton>
                <SmallButton><KeyGlyph />Activate</SmallButton>
                <SmallButton><ProductGlyph />Product Info</SmallButton>
              </Stack>
              <Divider />
              <BigButton $width={62}><CartGlyph />Subscribe</BigButton>
              <BigButton $width={46}><ManageGlyph />Manage</BigButton>
            </GroupBody>
            <GroupLabel $alert>Trial Expired</GroupLabel>
          </Group>
          <Collapse aria-label="Collapse ribbon"><Svg w={10} h={8} stroke="#777" sw={1.8}><path d="M1 6.500l4-4 4 4" /></Svg></Collapse>
        </Ribbon>

        <TabStrip>
          <DocTab $width={155}>
            <Svg w={155} h={24} stroke="#a9a9a9"><path d="M0 24L10 4q2-3.500 6-3.500h128q4 0 6 3.500l5 8" /></Svg>
            <span>Start</span>
          </DocTab>
          <DocTab $width={192}>
            <Svg w={192} h={24} stroke="#a9a9a9"><path d="M0 24L10 4q2-3.500 6-3.500h162q4 0 6 3.500l8 20" fill="#fff" /></Svg>
            <span>electronic-devices-9th-...</span>
            <Svg w={8} h={8} stroke="#222" sw={1.5}><path d="M1 1l6 6M7 1L1 7" /></Svg>
          </DocTab>
          <TabMenu aria-label="Tab list"><Caret w={9} h={5} /></TabMenu>
        </TabStrip>

        <Workspace>
          <SideBar>
            <Expand aria-label="Expand panel"><Svg w={6} h={10}><path d="M0 0v10l6-5z" fill="#111" stroke="none" /></Svg></Expand>
            <SideTools>
              {sideGlyphs.map(([name, glyph]) => <SideButton key={name} aria-label={name}>{glyph}</SideButton>)}
            </SideTools>
          </SideBar>
          <Splitter>
            <Svg w={4} h={44} stroke="#dcdcdc"><path d="M.5 0v44M2.500 0v44" strokeDasharray="1 1.500" /></Svg>
          </Splitter>
          <PageView>
            <Column>
              <Lead>
                <Line>in Figure 2–17(a). When the diode is reverse-biased, it acts as an open switch in parallel</Line>
                <Line>with the large internal reverse resistance (<i>r</i>′<sub>R</sub>), as shown in Figure 2–17(b). The barrier</Line>
                <Line $last>potential does not affect reverse bias, so it is not a factor.</Line>
              </Lead>
            </Column>
            <Figures>
              <Figure><ForwardCircuit /><figcaption>(a) Forward bias</figcaption></Figure>
              <Figure><ReverseCircuit /><figcaption>(b) Reverse bias</figcaption></Figure>
              <Figure><CurveChart /><figcaption>(c) <i>V-I</i> characteristic curve</figcaption></Figure>
            </Figures>
            <Column>
              <FigureTitle>
                <Svg w={9} h={8}><path d="M4.500 0L9 8H0z" fill="#efbe1c" stroke="none" /></Svg>
                FIGURE 2–17
              </FigureTitle>
              <FigureNote>The complete model of a diode.</FigureNote>
              <Body>
                <Line $indent>The characteristic curve for the complete diode model is shown in Figure 2–17(c).</Line>
                <Line>Since the barrier potential and the forward dynamic resistance are included, the diode is as-</Line>
                <Line>sumed to have a voltage across it when forward-biased. This voltage (<i>V</i><sub>F</sub>) consists of the</Line>
                <Line>barrier potential voltage plus the small voltage drop across the dynamic resistance, as indi-</Line>
                <Line>cated by the portion of the curve to the right of the origin. The curve slopes because the</Line>
              </Body>
            </Column>
            <Ink />
          </PageView>
          <ScrollBar>
            <SplitBox />
            <Svg w={6} h={4}><path d="M0 4h6L3 0z" fill="#222" stroke="none" /></Svg>
            <Thumb />
            <Caret w={6} />
          </ScrollBar>
        </Workspace>

        <StatusBar>
          <StatusGroup $gap={12} $after={10}>
            <IconButton aria-label="First page"><Svg w={13} h={12}><path d="M6 0v12L0 6zM12 0v12h-2L7 8V4l3-4z" fill="#111" stroke="none" /></Svg></IconButton>
            <IconButton aria-label="Previous page"><Svg w={8} h={12}><path d="M8 0v12L0 6z" fill="#111" stroke="none" /></Svg></IconButton>
            <DropDown $width={114} $height={20}>
              <select aria-label="Page"><option>42 (60 / 976)</option></select>
              <Caret />
            </DropDown>
            <IconButton aria-label="Next page"><Svg w={8} h={12}><path d="M0 0v12l8-6z" fill="#111" stroke="none" /></Svg></IconButton>
            <IconButton aria-label="Last page"><Svg w={13} h={12}><path d="M7 0v12l6-6zM1 0v12h2l3-4V4L3 0z" fill="#111" stroke="none" /></Svg></IconButton>
            <IconButton aria-label="Previous view"><Svg w={16} h={16} stroke="#666"><path d="M4 10.500H.500v-9h7M5.500 7.500h10v8h-10z" /><path d="M14 3.500H8M10 1L7.500 3.500 10 6" stroke="#2f8a8a" /></Svg></IconButton>
            <IconButton aria-label="Next view"><Svg w={16} h={16} stroke="#c0c0c0"><path d="M4 8.500H.500v-7h10v4M8 15.500h7.500v-8H8M0 12.500h6M4 10l3 2.500L4 15" /></Svg></IconButton>
          </StatusGroup>
          <StatusGroup $gap={0} $after={12}>
            <ViewMode aria-label="Single page"><Svg w={11} h={14}><path d="M.5.500h10v13H.500zM3 3.500h5M3 6.500h5M3 9.500h5" /></Svg></ViewMode>
            <ViewMode aria-label="Continuous" $on><Svg w={12} h={18}><path d="M1.500 0v9.500h9V0M3 3.500h6M3 6.500h6M1.500 18v-5.500h9V18M3 15.500h6" /></Svg></ViewMode>
            <ViewMode aria-label="Facing"><Svg w={15} h={14}><path d="M.5.500h6v13h-6zM8.500.500h6v13h-6zM2 4.500h3M2 7.500h3M2 10.500h3M10 4.500h3M10 7.500h3M10 10.500h3" /></Svg></ViewMode>
            <ViewMode aria-label="Continuous facing"><Svg w={15} h={16}><path d="M6.500 0v7H0M8.500 0v7H15M6.500 16V9.500H0M8.500 16V9.500H15M1 2.500h4M1 4.500h4M10 2.500h4M10 4.500h4M1 12.500h4M1 14.500h4M10 12.500h4M10 14.500h4" /></Svg></ViewMode>
          </StatusGroup>
          <ZoomValue>119.10% <Caret /></ZoomValue>
          <IconButton aria-label="Zoom out"><Svg w={16} h={16} stroke="#333"><circle cx="8" cy="8" r="7.300" /><path d="M4 8h8" /></Svg></IconButton>
          <ZoomSlider type="range" min={0} max={100} defaultValue={51} aria-label="Zoom level" />
          <IconButton aria-label="Zoom in"><Svg w={16} h={16} stroke="#333"><circle cx="8" cy="8" r="7.300" /><path d="M4 8h8M8 4v8" /></Svg></IconButton>
        </StatusBar>

        <ShareNotice><span>away from the shared</span><span>application.</span></ShareNotice>
        <ShareFrame />
      </Window>
    </Desktop>
  );
}
